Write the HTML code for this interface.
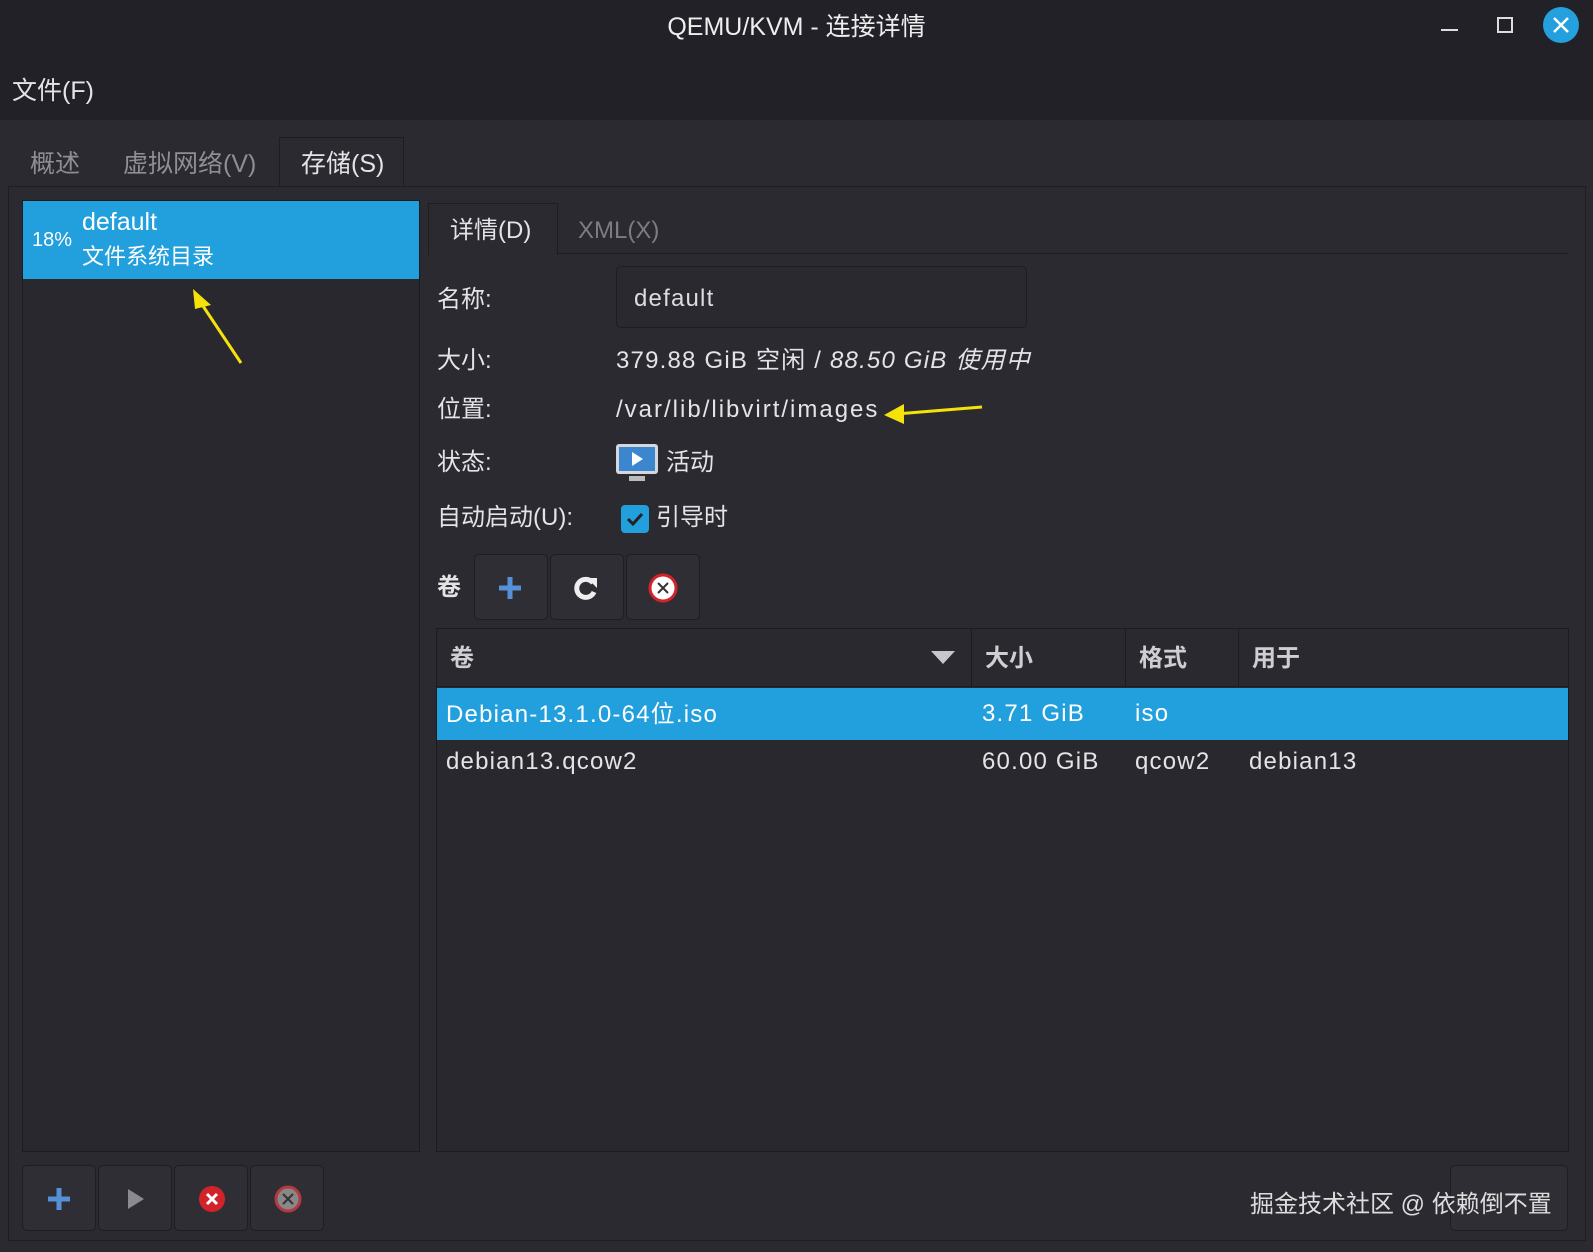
<!DOCTYPE html>
<html><head><meta charset="utf-8"><style>
*{margin:0;padding:0;box-sizing:border-box}
body{width:1593px;height:1252px;background:#2b2a30;font-family:"Liberation Sans","Noto Sans CJK SC",sans-serif;color:#e4e4e6;position:relative;overflow:hidden;font-size:24px}
.a{position:absolute;white-space:nowrap;line-height:30px}
.l{letter-spacing:1.2px}
.btn{position:absolute;background:#2f2e35;border:1px solid #1e1d22;border-radius:5px}
</style></head><body>
<div class="a" style="left:0;top:0;width:1593px;height:120px;background:#222127"></div>
<div class="a" style="left:0;top:12px;width:1593px;text-align:center;font-size:25px;color:#eee">QEMU/KVM - 连接详情</div>
<div class="a" style="left:1441px;top:29px;width:17px;height:2px;background:#ddd"></div>
<div class="a" style="left:1497px;top:17px;width:16px;height:16px;border:2px solid #ddd"></div>
<div class="a" style="left:1543px;top:7px;width:36px;height:36px;border-radius:50%;background:#23a0dd"></div>
<svg class="a" style="left:1551px;top:15px" width="20" height="20"><path d="M3 3L17 17M17 3L3 17" stroke="#fff" stroke-width="2.5"/></svg>
<div class="a" style="left:12px;top:76px;font-size:25px">文件(F)</div>
<div class="a" style="left:30px;top:149px;color:#8f8e95;font-size:25px">概述</div>
<div class="a" style="left:123px;top:149px;color:#8f8e95;font-size:25px">虚拟网络(V)</div>
<div class="a" style="left:279px;top:137px;width:125px;height:50px;background:#2b2a30;border:1px solid #1e1d22;border-bottom:none"></div>
<div class="a" style="left:301px;top:149px;font-size:25px">存储(S)</div>
<div class="a" style="left:8px;top:186px;width:1578px;height:1055px;border:1px solid #1e1d22"></div>
<div class="a" style="left:22px;top:200px;width:398px;height:952px;background:#29282e;border:1px solid #1c1b20"></div>
<div class="a" style="left:23px;top:201px;width:396px;height:78px;background:#229fdd"></div>
<div class="a" style="left:32px;top:225px;font-size:20px;color:#fff">18%</div>
<div class="a" style="left:82px;top:207px;font-size:25px;color:#fff" class="l">default</div>
<div class="a" style="left:82px;top:242px;font-size:22px;color:#fff">文件系统目录</div>
<svg class="a" style="left:185px;top:285px" width="60" height="80"><path d="M56 78L12 12" stroke="#f4e20a" stroke-width="3"/><path d="M8 4L26 20L10 24Z" fill="#f4e20a"/></svg>
<div class="a" style="left:428px;top:203px;width:130px;height:52px;background:#2b2a30;border:1px solid #1e1d22;border-bottom:none"></div>
<div class="a" style="left:450px;top:216px">详情(D)</div>
<div class="a" style="left:578px;top:216px;color:#7d7c83">XML(X)</div>
<div class="a" style="left:557px;top:253px;width:1012px;height:1px;background:#1e1d22"></div>
<div class="a" style="left:437px;top:285px">名称:</div>
<div class="a" style="left:616px;top:266px;width:411px;height:62px;background:#2a292f;border:1px solid #1e1d22;border-radius:5px"></div>
<div class="a l" style="left:634px;top:284px;color:#ddd">default</div>
<div class="a" style="left:437px;top:346px">大小:</div>
<div class="a l" style="left:616px;top:346px">379.88 GiB 空闲 / <i>88.50 GiB 使用中</i></div>
<div class="a" style="left:437px;top:395px">位置:</div>
<div class="a l" style="left:616px;top:395px;letter-spacing:2px">/var/lib/libvirt/images</div>
<svg class="a" style="left:882px;top:400px" width="105" height="30"><path d="M100 7L14 14" stroke="#f4e20a" stroke-width="3"/><path d="M2 15L22 4L22 24Z" fill="#f4e20a"/></svg>
<div class="a" style="left:437px;top:448px">状态:</div>
<svg class="a" style="left:615px;top:443px" width="44" height="40"><rect x="1" y="1" width="42" height="30" rx="3" fill="#d5d7da"/><rect x="4" y="4" width="36" height="24" fill="#3a87d0"/><path d="M17 9L28 16L17 23Z" fill="#fff"/><rect x="14" y="33" width="16" height="5" fill="#bbb"/></svg>
<div class="a" style="left:666px;top:448px">活动</div>
<div class="a" style="left:437px;top:503px">自动启动(U):</div>
<div class="a" style="left:621px;top:505px;width:28px;height:28px;background:#229fdd;border-radius:4px"></div>
<svg class="a" style="left:621px;top:505px" width="28" height="28"><path d="M7 14L12 19L21 9" stroke="#222" stroke-width="3" fill="none"/></svg>
<div class="a" style="left:656px;top:503px">引导时</div>
<div class="a" style="left:437px;top:573px;font-weight:bold">卷</div>
<div class="btn" style="left:474px;top:554px;width:74px;height:66px"></div>
<div class="btn" style="left:550px;top:554px;width:74px;height:66px"></div>
<div class="btn" style="left:626px;top:554px;width:74px;height:66px"></div>
<svg class="a" style="left:497px;top:575px" width="26" height="26"><path d="M13 2V24M2 13H24" stroke="#5590d8" stroke-width="5"/></svg>
<svg class="a" style="left:573px;top:575px" width="26" height="26"><path d="M20 8A9 9 0 1 0 21 17" stroke="#eee" stroke-width="5" fill="none"/><path d="M14 3L24 3L24 13Z" fill="#eee"/></svg>
<svg class="a" style="left:648px;top:573px" width="30" height="30"><circle cx="15" cy="15" r="13" fill="#fff" stroke="#d3232a" stroke-width="3"/><path d="M10 10L20 20M20 10L10 20" stroke="#333" stroke-width="2"/></svg>
<div class="a" style="left:436px;top:628px;width:1133px;height:524px;background:#29282e;border:1px solid #1c1b20"></div>
<div class="a" style="left:437px;top:629px;width:1131px;height:58px;background:#2a292f;border-bottom:1px solid #1c1b20"></div>
<div class="a" style="left:971px;top:629px;width:1px;height:58px;background:#1c1b20"></div>
<div class="a" style="left:1125px;top:629px;width:1px;height:58px;background:#1c1b20"></div>
<div class="a" style="left:1238px;top:629px;width:1px;height:58px;background:#1c1b20"></div>
<div class="a" style="left:450px;top:644px;font-weight:bold;color:#cfcfd2">卷</div>
<svg class="a" style="left:931px;top:651px" width="24" height="14"><path d="M0 0H24L12 13Z" fill="#c7c7cb"/></svg>
<div class="a" style="left:985px;top:644px;font-weight:bold;color:#cfcfd2">大小</div>
<div class="a" style="left:1139px;top:644px;font-weight:bold;color:#cfcfd2">格式</div>
<div class="a" style="left:1252px;top:644px;font-weight:bold;color:#cfcfd2">用于</div>
<div class="a" style="left:437px;top:688px;width:1131px;height:52px;background:#229fdd"></div>
<div class="a l" style="left:446px;top:700px;color:#fff">Debian-13.1.0-64位.iso</div>
<div class="a l" style="left:982px;top:699px;color:#fff">3.71 GiB</div>
<div class="a l" style="left:1135px;top:699px;color:#fff">iso</div>
<div class="a l" style="left:446px;top:747px">debian13.qcow2</div>
<div class="a l" style="left:982px;top:747px">60.00 GiB</div>
<div class="a l" style="left:1135px;top:747px">qcow2</div>
<div class="a l" style="left:1249px;top:747px">debian13</div>
<div class="btn" style="left:22px;top:1165px;width:74px;height:66px"></div>
<div class="btn" style="left:98px;top:1165px;width:74px;height:66px"></div>
<div class="btn" style="left:174px;top:1165px;width:74px;height:66px"></div>
<div class="btn" style="left:250px;top:1165px;width:74px;height:66px"></div>
<div class="btn" style="left:1450px;top:1165px;width:118px;height:66px"></div>
<svg class="a" style="left:46px;top:1186px" width="26" height="26"><path d="M13 2V24M2 13H24" stroke="#5590d8" stroke-width="5"/></svg>
<svg class="a" style="left:126px;top:1187px" width="20" height="24"><path d="M2 2L18 12L2 22Z" fill="#8a8a8f"/></svg>
<svg class="a" style="left:197px;top:1184px" width="30" height="30"><circle cx="15" cy="15" r="13" fill="#d3232a"/><path d="M10 10L20 20M20 10L10 20" stroke="#fff" stroke-width="3"/></svg>
<svg class="a" style="left:273px;top:1184px" width="30" height="30"><circle cx="15" cy="15" r="12" fill="#888" stroke="#b33a3e" stroke-width="3"/><path d="M10 10L20 20M20 10L10 20" stroke="#333" stroke-width="2"/></svg>
<div class="a" style="left:1250px;top:1190px;color:#ddd">掘金技术社区 @ 依赖倒不置</div>
</body></html>
